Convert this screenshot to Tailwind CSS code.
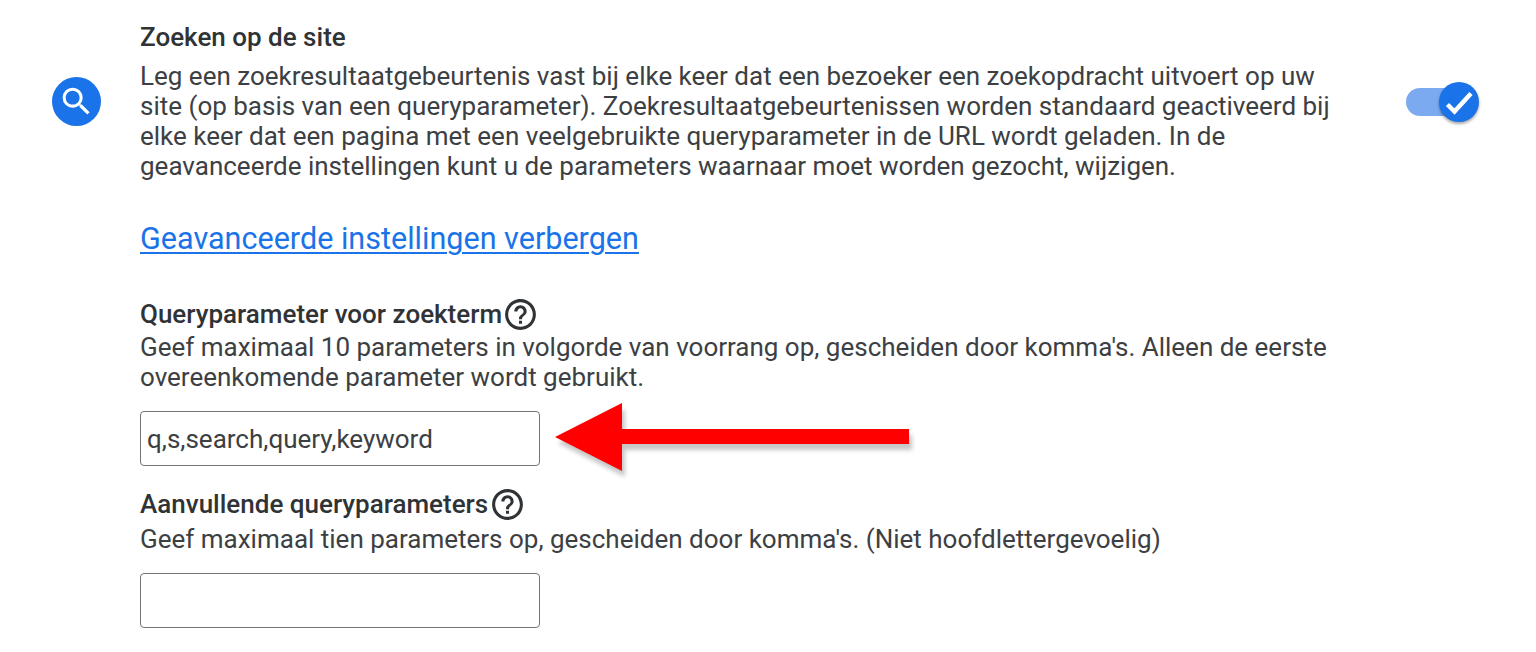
<!DOCTYPE html>
<html lang="en">
<head>
    <meta charset="UTF-8">
    <title>Zoeken op de site</title>
    <script src="https://cdn.jsdelivr.net/npm/@tailwindcss/browser@4"></script>
</head>
<body class="bg-white overflow-hidden font-['Roboto',sans-serif] text-[#3c4043]">
    <div class="relative h-[652px] pl-[52px] pt-[22px]">
        <div class="flex items-center w-[1427px]">
            <div class="w-[49px] h-[49px] rounded-full bg-[#1a73e8] flex items-center justify-center shrink-0">
                <svg width="37" height="37" viewBox="0 0 24 24" fill="#fff"><path d="M15.5 14h-.79l-.28-.27A6.47 6.47 0 0 0 16 9.5 6.5 6.5 0 1 0 9.5 16c1.61 0 3.09-.59 4.23-1.57l.27.28v.79l5 4.99L20.49 19l-4.99-5zm-6 0C7.01 14 5 11.99 5 9.5S7.01 5 9.5 5 14 7.01 14 9.5 11.99 14 9.5 14z"/></svg>
            </div>
            <div class="ml-[39px] w-[1230px]">
                <h2 class="text-[26px] leading-[30px] font-medium text-[#303336]">Zoeken op de site</h2>
                <p class="mt-[9px] text-[26px] leading-[30px]">Leg een zoekresultaatgebeurtenis vast bij elke keer dat een bezoeker een zoekopdracht uitvoert op uw<br>site (op basis van een queryparameter). Zoekresultaatgebeurtenissen worden standaard geactiveerd bij<br>elke keer dat een pagina met een veelgebruikte queryparameter in de URL wordt geladen. In de<br>geavanceerde instellingen kunt u de parameters waarnaar moet worden gezocht, wijzigen.</p>
            </div>
            <div class="relative ml-auto w-[73px] h-[40px] shrink-0">
                <div class="absolute left-0 top-[6px] w-[60px] h-[28px] rounded-full bg-[#7baaf1]"></div>
                <div class="absolute right-0 top-0 w-[40px] h-[40px] rounded-full bg-[#1a73e8] shadow-[0_2px_3px_rgba(0,0,0,0.35)]">
                    <svg width="40" height="40" viewBox="0 0 40 40" fill="none" stroke="#fff" stroke-width="4.5"><path d="M8.5 22.5 L15.5 29.5 L32 11.5"/></svg>
                </div>
            </div>
        </div>

        <div class="ml-[88px]">
            <a href="#" class="block mt-[40px] text-[30.55px] leading-[36px] text-[#1a73e8] underline underline-offset-[3px] decoration-2">Geavanceerde instellingen verbergen</a>

            <div class="mt-[41px] flex items-center h-[32px]">
                <span class="text-[26px] font-medium text-[#303336]">Queryparameter voor zoekterm</span>
                <svg width="37" height="37" viewBox="0 0 24 24" fill="#303336"><path d="M11 18h2v-2h-2v2zm1-16C6.48 2 2 6.48 2 12s4.48 10 10 10 10-4.48 10-10S17.52 2 12 2zm0 18c-4.41 0-8-3.59-8-8s3.59-8 8-8 8 3.59 8 8-3.59 8-8 8zm0-14c-2.21 0-4 1.79-4 4h2c0-1.1.9-2 2-2s2 .9 2 2c0 2-3 1.75-3 5h2c0-2.25 3-2.5 3-5 0-2.21-1.79-4-4-4z"/></svg>
            </div>
            <p class="mt-[2px] text-[26px] leading-[30px]">Geef maximaal 10 parameters in volgorde van voorrang op, gescheiden door komma's. Alleen de eerste<br>overeenkomende parameter wordt gebruikt.</p>
            <div class="mt-[19px] w-[400px] h-[55px] border border-[#70757a] rounded-[4px] pl-[6px] pt-[2px] flex items-center text-[26px] text-[#3c4043]">q,s,search,query,keyword</div>

            <div class="mt-[22px] flex items-center h-[32px]">
                <span class="text-[26px] font-medium text-[#303336]">Aanvullende queryparameters</span>
                <svg class="ml-px" width="37" height="37" viewBox="0 0 24 24" fill="#303336"><path d="M11 18h2v-2h-2v2zm1-16C6.48 2 2 6.48 2 12s4.48 10 10 10 10-4.48 10-10S17.52 2 12 2zm0 18c-4.41 0-8-3.59-8-8s3.59-8 8-8 8 3.59 8 8-3.59 8-8 8zm0-14c-2.21 0-4 1.79-4 4h2c0-1.1.9-2 2-2s2 .9 2 2c0 2-3 1.75-3 5h2c0-2.25 3-2.5 3-5 0-2.21-1.79-4-4-4z"/></svg>
            </div>
            <p class="mt-[4px] text-[26px] leading-[30px]">Geef maximaal tien parameters op, gescheiden door komma's. (Niet hoofdlettergevoelig)</p>
            <div class="mt-[19px] w-[400px] h-[55px] border border-[#70757a] rounded-[4px]"></div>
        </div>

        <svg class="absolute left-[550px] top-[398px] drop-shadow-[3px_6px_2px_rgba(0,0,0,0.22)]" width="372" height="84" viewBox="0 0 372 84">
            <path d="M5 39 L72 5 L72 31 L359 31 L359 46 L72 46 L72 73 Z" fill="#ff0000"/>
        </svg>
    </div>
</body>
</html>
